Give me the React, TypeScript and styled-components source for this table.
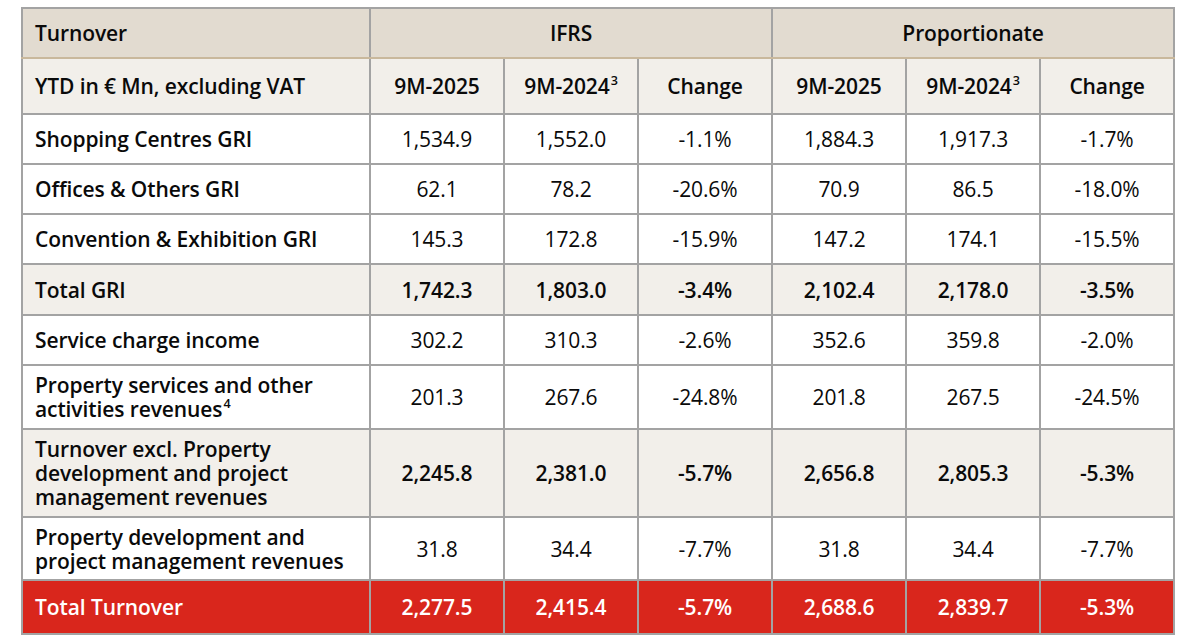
import React from "react";
import styled, { createGlobalStyle } from "styled-components";

const Global = createGlobalStyle`
  html, body { margin: 0; padding: 0; background: #ffffff; }
  body { font-family: "Open Sans", Lato, sans-serif; color: #0a0a0a; }
`;

const Wrap = styled.div`
  padding: 7px 0 0 21px;
`;

const Table = styled.table`
  width: 1152px;
  border-collapse: collapse;
  table-layout: fixed;
  font-family: "Open Sans", Lato, sans-serif;
  font-size: 21px;
  line-height: 24px;
  letter-spacing: -0.1px;
  border: 2px solid #a3a3a3;
`;

const Row = styled.tr<{ $h: number; $bg?: string; $bold?: boolean; $red?: boolean }>`
  height: ${(p) => p.$h}px;
  background: ${(p) => (p.$red ? "#d9261c" : p.$bg || "#ffffff")};
  color: ${(p) => (p.$red ? "#ffffff" : "#0a0a0a")};
  font-weight: ${(p) => (p.$bold ? 600 : 400)};
`;

const Cell = styled.td<{ $label?: boolean; $tanBottom?: boolean }>`
  border: 2px solid #a3a3a3;
  ${(p) => (p.$tanBottom ? "border-bottom-color: #c9b89c;" : "")}
  padding: 0 ${(p) => (p.$label ? "12px" : "4px")};
  text-align: ${(p) => (p.$label ? "left" : "center")};
  font-weight: ${(p) => (p.$label ? 600 : "inherit")};
  vertical-align: middle;
  white-space: nowrap;
`;

const HeadCell = styled(Cell)`
  font-weight: 600;
`;

const Sup = styled.sup`
  font-size: 0.6em;
  line-height: 0;
  vertical-align: 0.7em;
  margin-left: 1px;
`;

type Data = {
  label: React.ReactNode;
  vals: string[];
  h: number;
  bold?: boolean;
  shaded?: boolean;
  red?: boolean;
};

const rows: Data[] = [
  { label: "Shopping Centres GRI", vals: ["1,534.9", "1,552.0", "-1.1%", "1,884.3", "1,917.3", "-1.7%"], h: 50 },
  { label: "Offices & Others GRI", vals: ["62.1", "78.2", "-20.6%", "70.9", "86.5", "-18.0%"], h: 50 },
  { label: "Convention & Exhibition GRI", vals: ["145.3", "172.8", "-15.9%", "147.2", "174.1", "-15.5%"], h: 50 },
  { label: "Total GRI", vals: ["1,742.3", "1,803.0", "-3.4%", "2,102.4", "2,178.0", "-3.5%"], h: 51, bold: true, shaded: true },
  { label: "Service charge income", vals: ["302.2", "310.3", "-2.6%", "352.6", "359.8", "-2.0%"], h: 50 },
  {
    label: (
      <>
        Property services and other
        <br />
        activities revenues<Sup>4</Sup>
      </>
    ),
    vals: ["201.3", "267.6", "-24.8%", "201.8", "267.5", "-24.5%"],
    h: 64,
  },
  {
    label: (
      <>
        Turnover excl. Property
        <br />
        development and project
        <br />
        management revenues
      </>
    ),
    vals: ["2,245.8", "2,381.0", "-5.7%", "2,656.8", "2,805.3", "-5.3%"],
    h: 88,
    bold: true,
    shaded: true,
  },
  {
    label: (
      <>
        Property development and
        <br />
        project management revenues
      </>
    ),
    vals: ["31.8", "34.4", "-7.7%", "31.8", "34.4", "-7.7%"],
    h: 63,
  },
  { label: "Total Turnover", vals: ["2,277.5", "2,415.4", "-5.7%", "2,688.6", "2,839.7", "-5.3%"], h: 54, bold: true, red: true },
];

export default function App() {
  return (
    <>
      <Global />
      <Wrap>
        <Table>
          <colgroup>
            <col style={{ width: 348 }} />
            <col style={{ width: 134 }} />
            <col style={{ width: 134 }} />
            <col style={{ width: 134 }} />
            <col style={{ width: 134 }} />
            <col style={{ width: 134 }} />
            <col style={{ width: 134 }} />
          </colgroup>
          <thead>
            <Row $h={50} $bg="#e2dbd0">
              <HeadCell $label $tanBottom>Turnover</HeadCell>
              <HeadCell colSpan={3} $tanBottom>IFRS</HeadCell>
              <HeadCell colSpan={3} $tanBottom>Proportionate</HeadCell>
            </Row>
            <Row $h={56} $bg="#f2efea">
              <HeadCell $label>YTD in € Mn, excluding VAT</HeadCell>
              <HeadCell>9M-2025</HeadCell>
              <HeadCell>
                9M-2024<Sup>3</Sup>
              </HeadCell>
              <HeadCell>Change</HeadCell>
              <HeadCell>9M-2025</HeadCell>
              <HeadCell>
                9M-2024<Sup>3</Sup>
              </HeadCell>
              <HeadCell>Change</HeadCell>
            </Row>
          </thead>
          <tbody>
            {rows.map((r, i) => (
              <Row key={i} $h={r.h} $bold={r.bold} $red={r.red} $bg={r.shaded ? "#f2efea" : undefined}>
                <Cell $label>{r.label}</Cell>
                {r.vals.map((v, j) => (
                  <Cell key={j}>{v}</Cell>
                ))}
              </Row>
            ))}
          </tbody>
        </Table>
      </Wrap>
    </>
  );
}
